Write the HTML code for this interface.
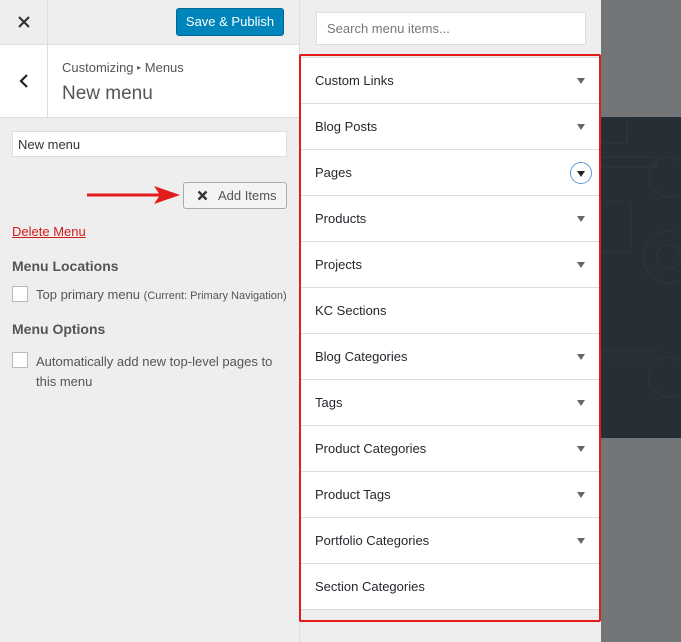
<!DOCTYPE html>
<html><head><style>
*{box-sizing:border-box;margin:0;padding:0}
body{width:681px;height:642px;overflow:hidden;background:#eee;font-family:"Liberation Sans",sans-serif;position:relative;color:#555}
.abs{position:absolute}
.row{position:absolute;left:301px;width:298px;height:46px;background:#fff;border-bottom:1px solid #ddd;font-size:13px;color:#23282d;padding:0 0 0 14px;line-height:45px}
.row .ar{position:absolute;right:14px;top:20px;width:0;height:0;border-left:4px solid transparent;border-right:4px solid transparent;border-top:6px solid #666}
</style></head><body>
<div class="abs" style="left:601px;top:0;width:80px;height:642px;background:#727679"></div>
<div class="abs" style="left:601px;top:117px;width:80px;height:321px;background:#262e36"></div>
<svg class="abs" style="left:601px;top:117px" width="80" height="321" fill="none" stroke="#2c343c" stroke-width="1.5">
<circle cx="68" cy="60" r="20"/><circle cx="68" cy="140" r="26"/><circle cx="68" cy="140" r="12"/><circle cx="68" cy="260" r="20"/>
<rect x="0" y="40" width="55" height="10"/><rect x="0" y="233" width="55" height="10"/><rect x="0" y="0" width="26" height="26"/><rect x="0" y="85" width="30" height="50"/>
</svg>
<div class="abs" style="left:0;top:0;width:299px;height:45px;border-bottom:1px solid #ddd"></div>
<div class="abs" style="left:47px;top:0;width:1px;height:118px;background:#ddd"></div>
<svg class="abs" style="left:17px;top:15px" width="14" height="14"><path d="M2 2L12 12M12 2L2 12" stroke="#333" stroke-width="2.2"/></svg>
<div class="abs" style="left:176px;top:8px;width:108px;height:28px;background:#0085ba;border-radius:3px;border:1px solid #006799;color:#fff;font-size:13px;line-height:26px;text-align:center">Save &amp; Publish</div>
<div class="abs" style="left:0;top:45px;width:299px;height:73px;background:#fff;border-bottom:1px solid #ddd"></div>
<div class="abs" style="left:47px;top:45px;width:1px;height:73px;background:#ddd"></div>
<svg class="abs" style="left:18px;top:73px" width="12" height="16"><path d="M9 2 L3 8 L9 14" stroke="#222" stroke-width="2.2" fill="none"/></svg>
<div class="abs" style="left:62px;top:60px;font-size:13px;color:#555">Customizing <span style="font-size:8px;position:relative;top:-2px">▸</span> Menus</div>
<div class="abs" style="left:62px;top:83px;font-size:19px;color:#555;font-weight:300">New menu</div>
<div class="abs" style="left:12px;top:131px;width:275px;height:26px;background:#fff;border:1px solid #ddd;font-size:13px;color:#333;padding:5px 5px">New menu</div>
<svg class="abs" style="left:86px;top:184px" width="96" height="22"><line x1="1" y1="11" x2="75" y2="11" stroke="#e21b1b" stroke-width="3"/><path d="M68 2 L94 11 L68 20 L74 11Z" fill="#e21b1b"/></svg>
<div class="abs" style="left:183px;top:182px;width:104px;height:27px;border:1px solid #aaa;border-radius:3px;background:#f3f3f3;font-size:13px;color:#555;line-height:25px;padding-left:34px">Add Items</div>
<svg class="abs" style="left:197px;top:190px" width="11" height="11"><path d="M1.5 1.5L9.5 9.5M9.5 1.5L1.5 9.5" stroke="#333" stroke-width="2.4"/></svg>
<div class="abs" style="left:12px;top:224px;font-size:13px;color:#d01c1c;text-decoration:underline">Delete Menu</div>
<div class="abs" style="left:12px;top:258px;font-size:14px;color:#555;font-weight:bold">Menu Locations</div>
<div class="abs" style="left:12px;top:286px;width:16px;height:16px;background:#fff;border:1px solid #bbb"></div>
<div class="abs" style="left:36px;top:287px;font-size:13px;color:#555">Top primary menu <span style="font-size:11px">(Current: Primary Navigation)</span></div>
<div class="abs" style="left:12px;top:321px;font-size:14px;color:#555;font-weight:bold">Menu Options</div>
<div class="abs" style="left:12px;top:352px;width:16px;height:16px;background:#fff;border:1px solid #bbb"></div>
<div class="abs" style="left:36px;top:352px;font-size:13px;color:#555;line-height:20px;width:250px">Automatically add new top-level pages to this menu</div>
<div class="abs" style="left:299px;top:0;width:1px;height:642px;background:#ddd"></div>
<div class="abs" style="left:316px;top:12px;width:270px;height:33px;background:#fff;border:1px solid #ddd;font-size:13px;color:#777;padding:8px 10px">Search menu items...</div>
<div class="abs" style="left:301px;top:57px;width:298px;height:1px;background:#ddd"></div>
<div class="row" style="top:58px">Custom Links<i class="ar"></i></div>
<div class="row" style="top:104px">Blog Posts<i class="ar"></i></div>
<div class="row" style="top:150px">Pages<span class="abs" style="right:7px;top:12px;width:22px;height:22px;border:1.5px solid #5b9dd9;border-radius:50%"></span><i class="ar" style="border-top-color:#222;right:14px;top:21px"></i></div>
<div class="row" style="top:196px">Products<i class="ar"></i></div>
<div class="row" style="top:242px">Projects<i class="ar"></i></div>
<div class="row" style="top:288px">KC Sections</div>
<div class="row" style="top:334px">Blog Categories<i class="ar"></i></div>
<div class="row" style="top:380px">Tags<i class="ar"></i></div>
<div class="row" style="top:426px">Product Categories<i class="ar"></i></div>
<div class="row" style="top:472px">Product Tags<i class="ar"></i></div>
<div class="row" style="top:518px">Portfolio Categories<i class="ar"></i></div>
<div class="row" style="top:564px">Section Categories</div>
<div class="abs" style="left:299px;top:54px;width:302px;height:568px;border:2px solid #e21b1b;border-radius:2px"></div>
</body></html>
